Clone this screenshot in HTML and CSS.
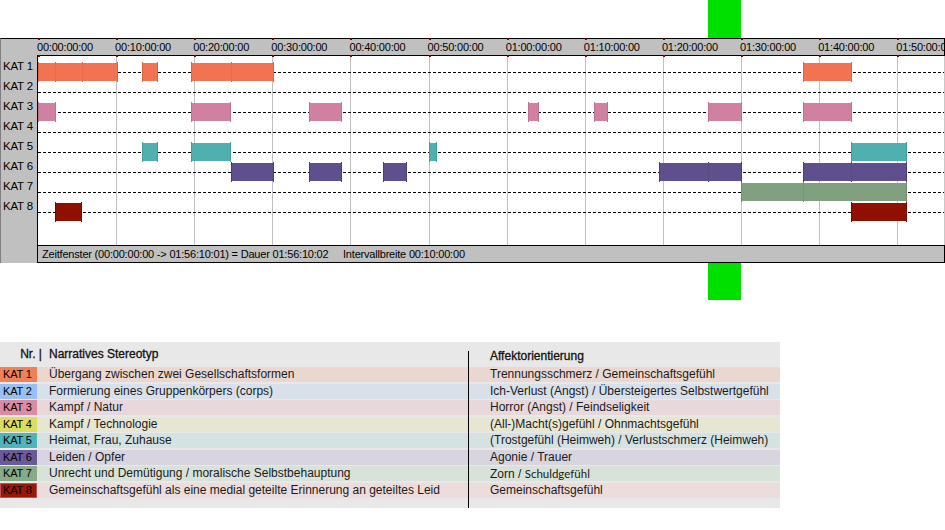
FILE: index.html
```html
<!DOCTYPE html>
<html lang="de">
<head>
<meta charset="utf-8">
<title>Zeitfenster</title>
<link rel="stylesheet" href="styles.css">
</head>
<body>
<div class="green"></div>
<div class="chart">
  <div class="labels">
    <div>KAT 1</div><div>KAT 2</div><div>KAT 3</div><div>KAT 4</div>
    <div>KAT 5</div><div>KAT 6</div><div>KAT 7</div><div>KAT 8</div>
  </div>
  <div class="ruler">
    <div class="ruler-labels">
      <span style="left:0px">00:00:00:00</span>
      <span style="left:78.12px">00:10:00:00</span>
      <span style="left:156.24px">00:20:00:00</span>
      <span style="left:234.36px">00:30:00:00</span>
      <span style="left:312.48px">00:40:00:00</span>
      <span style="left:390.6px">00:50:00:00</span>
      <span style="left:468.72px">01:00:00:00</span>
      <span style="left:546.84px">01:10:00:00</span>
      <span style="left:624.96px">01:20:00:00</span>
      <span style="left:703.08px">01:30:00:00</span>
      <span style="left:781.2px">01:40:00:00</span>
      <span style="left:859.32px">01:50:00:00</span>
    </div>
    <i class="sq" style="left:1px"></i><i class="sq b" style="left:1px"></i>
    <i class="sq" style="left:79.12px"></i><i class="sq b" style="left:79.12px"></i>
    <i class="sq" style="left:157.24px"></i><i class="sq b" style="left:157.24px"></i>
    <i class="sq" style="left:235.36px"></i><i class="sq b" style="left:235.36px"></i>
    <i class="sq" style="left:313.48px"></i><i class="sq b" style="left:313.48px"></i>
    <i class="sq" style="left:391.6px"></i><i class="sq b" style="left:391.6px"></i>
    <i class="sq" style="left:469.72px"></i><i class="sq b" style="left:469.72px"></i>
    <i class="sq" style="left:547.84px"></i><i class="sq b" style="left:547.84px"></i>
    <i class="sq" style="left:625.96px"></i><i class="sq b" style="left:625.96px"></i>
    <i class="sq" style="left:704.08px"></i><i class="sq b" style="left:704.08px"></i>
    <i class="sq" style="left:782.2px"></i><i class="sq b" style="left:782.2px"></i>
    <i class="sq" style="left:860.32px"></i><i class="sq b" style="left:860.32px"></i>
  </div>
  <div class="plot">
    <i class="vl" style="left:78.12px"></i>
    <i class="vl" style="left:156.24px"></i>
    <i class="vl" style="left:234.36px"></i>
    <i class="vl" style="left:312.48px"></i>
    <i class="vl" style="left:390.6px"></i>
    <i class="vl" style="left:468.72px"></i>
    <i class="vl" style="left:546.84px"></i>
    <i class="vl" style="left:624.96px"></i>
    <i class="vl" style="left:703.08px"></i>
    <i class="vl" style="left:781.2px"></i>
    <i class="vl" style="left:859.32px"></i>
    <div class="row k1">
      <div class="bar" style="left:0px;width:80px"><i class="tk" style="left:17px"></i><i class="tk" style="left:44px"></i></div>
      <div class="bar" style="left:104px;width:16px"></div>
      <div class="bar" style="left:153px;width:83px"><i class="tk" style="left:40px"></i></div>
      <div class="bar" style="left:765px;width:49px"></div>
    </div>
    <div class="row k2"></div>
    <div class="row k3">
      <div class="bar" style="left:0px;width:18px"></div>
      <div class="bar" style="left:153px;width:40px"></div>
      <div class="bar" style="left:271px;width:33px"></div>
      <div class="bar" style="left:490px;width:11px"></div>
      <div class="bar" style="left:556px;width:14px"></div>
      <div class="bar" style="left:670px;width:34px"></div>
      <div class="bar" style="left:765px;width:49px"></div>
    </div>
    <div class="row k4"></div>
    <div class="row k5">
      <div class="bar" style="left:104px;width:16px"></div>
      <div class="bar" style="left:153px;width:40px"></div>
      <div class="bar" style="left:391px;width:8px"></div>
      <div class="bar" style="left:813px;width:56px"></div>
    </div>
    <div class="row k6">
      <div class="bar" style="left:193px;width:43px"></div>
      <div class="bar" style="left:271px;width:33px"></div>
      <div class="bar" style="left:345px;width:24px"></div>
      <div class="bar" style="left:621px;width:83px"><i class="tk" style="left:49px"></i></div>
      <div class="bar" style="left:765px;width:104px"><i class="tk" style="left:48px"></i></div>
    </div>
    <div class="row k7">
      <div class="bar" style="left:703px;width:166px"><i class="tk" style="left:62px"></i></div>
    </div>
    <div class="row k8">
      <div class="bar" style="left:17px;width:27px"></div>
      <div class="bar" style="left:813px;width:56px"></div>
    </div>
  </div>
  <div class="status">
    <span class="st1">Zeitfenster (00:00:00:00 -&gt; 01:56:10:01) = Dauer 01:56:10:02</span>
    <span>Intervallbreite 00:10:00:00</span>
  </div>
</div>

<div class="legend">
  <div class="divider"></div>
  <div class="lhead">
    <span class="nr">Nr. |</span>
    <span class="narr">Narratives Stereotyp</span>
    <span class="aff">Affektorientierung</span>
  </div>
  <div class="lrows">
    <div class="lrow r1"><span class="lk">KAT 1</span><span class="c1">Übergang zwischen zwei Gesellschaftsformen</span><span class="c2">Trennungsschmerz / Gemeinschaftsgefühl</span></div>
    <div class="lrow r2"><span class="lk">KAT 2</span><span class="c1">Formierung eines Gruppenkörpers (corps)</span><span class="c2">Ich-Verlust (Angst) / Übersteigertes Selbstwertgefühl</span></div>
    <div class="lrow r3"><span class="lk">KAT 3</span><span class="c1">Kampf / Natur</span><span class="c2">Horror (Angst) / Feindseligkeit</span></div>
    <div class="lrow r4"><span class="lk">KAT 4</span><span class="c1">Kampf / Technologie</span><span class="c2">(All-)Macht(s)gefühl / Ohnmachtsgefühl</span></div>
    <div class="lrow r5"><span class="lk">KAT 5</span><span class="c1">Heimat, Frau, Zuhause</span><span class="c2">(Trostgefühl (Heimweh) / Verlustschmerz (Heimweh)</span></div>
    <div class="lrow r6"><span class="lk">KAT 6</span><span class="c1">Leiden / Opfer</span><span class="c2">Agonie / Trauer</span></div>
    <div class="lrow r7"><span class="lk">KAT 7</span><span class="c1">Unrecht und Demütigung / moralische Selbstbehauptung</span><span class="c2">Zorn / <span class="alt">Schuldgefühl</span></span></div>
    <div class="lrow r8"><span class="lk">KAT 8</span><span class="c1">Gemeinschaftsgefühl als eine medial geteilte Erinnerung an geteiltes Leid</span><span class="c2">Gemeinschaftsgefühl</span></div>
  </div>
</div>
</body>
</html>
```
FILE: styles.css
```css
* {
  box-sizing: border-box;
  margin: 0;
  padding: 0;
}

body {
  position: relative;
  width: 945px;
  height: 530px;
  overflow: hidden;
  background: #fff;
  padding-top: 38px;
  font-family: "Liberation Sans", Arial, sans-serif;
  color: #000;
}

.green {
  position: absolute;
  left: 708px;
  top: 0;
  width: 33px;
  height: 300px;
  background: #00e000;
}

/* ---------- chart ---------- */
.chart {
  position: relative;
  z-index: 1;
  display: grid;
  grid-template-columns: 37px 908px;
  grid-template-rows: 18px 189px 18px;
  font-size: 11px;
  letter-spacing: -0.2px;
}

.labels {
  grid-column: 1;
  grid-row: 1 / 4;
  background: #c0c0c0;
  border-top: 1px solid #000;
  border-left: 1px solid #808080;
  padding-top: 17px;
  font-size: 11.5px;
}

.labels div {
  height: 20px;
  line-height: 20px;
  padding-left: 2px;
  white-space: nowrap;
}

.ruler {
  grid-column: 2;
  grid-row: 1;
  position: relative;
  z-index: 2;
  background: #c0c0c0;
  border-top: 1px solid #000;
  border-bottom: 1px solid #000;
  border-right: 1px solid #000;
}

.ruler-labels {
  position: absolute;
  inset: 0;
  overflow: hidden;
}

.ruler-labels span {
  position: absolute;
  top: 0;
  line-height: 16px;
  white-space: nowrap;
}

.sq {
  position: absolute;
  top: -1px;
  width: 2px;
  height: 2px;
  background: #800000;
}

.sq.b {
  top: 16px;
}

.plot {
  grid-column: 2;
  grid-row: 2;
  position: relative;
  background: #fff;
  border-left: 1px solid #000;
  border-right: 1px solid #c8c8c8;
  padding-top: 6px;
}

.vl {
  position: absolute;
  top: 0;
  bottom: 0;
  width: 1px;
  background: #c0c0c0;
}

.row {
  position: relative;
  height: 20px;
}

.row::before {
  content: "";
  position: absolute;
  left: 0;
  right: 0;
  top: 10px;
  height: 1px;
  background: repeating-linear-gradient(90deg, #000 0 3px, transparent 3px 5px);
}

.bar {
  position: absolute;
  top: 1px;
  height: 18px;
  background: var(--c);
}

.bar::before,
.bar::after,
.tk {
  content: "";
  position: absolute;
  top: -1px;
  bottom: -1px;
  width: 1px;
}

.bar::before,
.bar::after {
  background: var(--d);
}

.tk {
  background: linear-gradient(to bottom,
    var(--d) 0 1px,
    rgba(0, 0, 0, 0.06) 1px calc(100% - 1px),
    var(--d) calc(100% - 1px) 100%);
}

.bar::before { left: 0; }
.bar::after { right: 0; }

.k1 { --c: #f27352; --d: #e0603f; }
.k3 { --c: #d080a0; --d: #c06f90; }
.k5 { --c: #50b0b0; --d: #3f9f9f; }
.k6 { --c: #5f4f8c; --d: #4c3d78; }
.k7 { --c: #80a080; --d: #6e8e6e; }
.k8 { --c: #901000; --d: #780a00; }

.status {
  grid-column: 2;
  grid-row: 3;
  display: flex;
  background: #c0c0c0;
  border: 1px solid #000;
  padding-left: 4px;
  line-height: 16px;
  white-space: nowrap;
}

.st1 {
  width: 301px;
  flex: none;
}

/* ---------- legend ---------- */
.legend {
  position: relative;
  margin-top: 79px;
  width: 780px;
  background: #e8e8e8;
  padding-bottom: 10.5px;
  font-size: 12px;
  color: #1a1a1a;
}

.divider {
  position: absolute;
  left: 468px;
  top: 9px;
  bottom: 0;
  width: 1px;
  background: #000;
}

.lhead {
  display: flex;
  height: 25px;
  -webkit-text-stroke: 0.3px #111;
  color: #111;
}

.nr {
  width: 42px;
  text-align: right;
  line-height: 25px;
}

.narr {
  width: 426px;
  padding-left: 7px;
  line-height: 25px;
}

.aff {
  padding-left: 22px;
  padding-top: 4px;
  line-height: 21px;
}

.lrows {
  display: flex;
  flex-direction: column;
  gap: 1.5px;
}

.lrow {
  display: flex;
  height: 15px;
  line-height: 15px;
  white-space: nowrap;
}

.lk {
  width: 37px;
  flex: none;
  padding-left: 3px;
  font-size: 11px;
  letter-spacing: -0.2px;
  color: #000;
}

.c1 {
  width: 431px;
  flex: none;
  padding-left: 12px;
}

.c2 {
  padding-left: 22px;
}

.alt {
  font-family: Lato, "Open Sans", sans-serif;
  font-size: 11.5px;
}

.r1 { background: #ead8d0; }
.r1 .lk { background: #f08058; }
.r2 { background: #d8e0ea; }
.r2 .lk { background: #98c0f2; }
.r3 { background: #e8d8dc; }
.r3 .lk { background: #dc8ca2; }
.r4 { background: #e6e6d2; }
.r4 .lk { background: #dcdc60; }
.r5 { background: #d4e2e2; }
.r5 .lk { background: #50b4b8; }
.r6 { background: #d8d4e0; }
.r6 .lk { background: #6a5a98; }
.r7 { background: #d8e2d8; }
.r7 .lk { background: #88aa88; }
.r8 { background: #ecdcdc; }
.r8 .lk { background: #981808; box-shadow: inset 0 0 0 1px #c05050; }
```
